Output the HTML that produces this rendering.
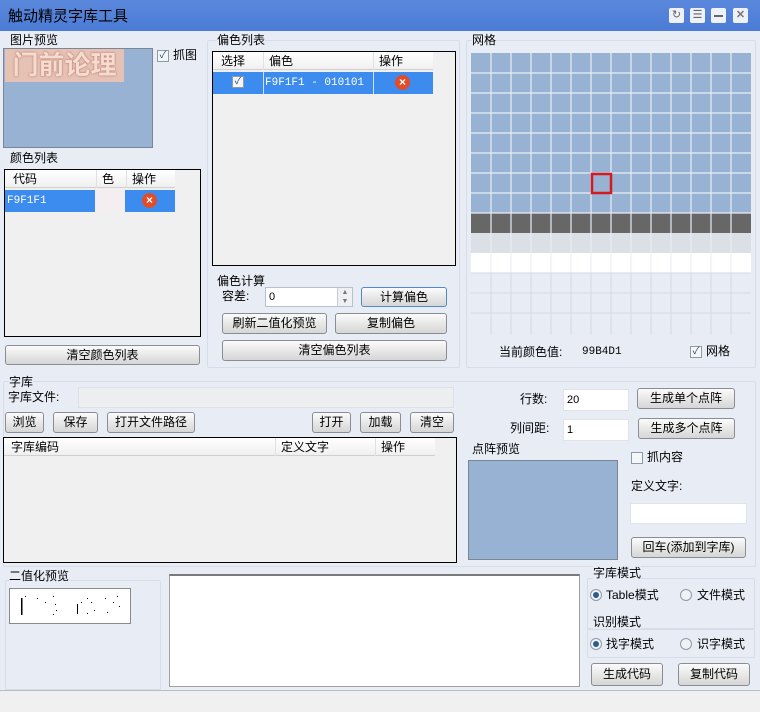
<!DOCTYPE html>
<html><head><meta charset="utf-8"><style>
*{box-sizing:border-box;margin:0;padding:0}
body{width:760px;height:712px;overflow:hidden;background:#e8edf5;font-family:"Liberation Sans","Noto Sans CJK SC",sans-serif;font-size:12px;color:#000;position:relative}
.a{position:absolute}
.t{position:absolute;white-space:nowrap;line-height:14px}
.btn{position:absolute;border:1px solid #8a8d92;border-radius:3px;background:linear-gradient(#fbfbfb,#e4e4e4 60%,#d6d6d6);text-align:center;font-size:12px;white-space:nowrap}
.inp{position:absolute;background:#fff;border:1px solid #b8c0cc;font-size:11px;padding-left:3px}
.grp{position:absolute;border:1px solid #d6dde8;border-radius:2px}
.cb{position:absolute;width:12px;height:12px;border:1px solid #8e9aa8;background:#f4f6f8;font-size:10px;line-height:10px;text-align:center;color:#2a4a7a}
.hdr{position:absolute;height:18px;background:linear-gradient(#fff,#f0f0f0);border-bottom:1px solid #d0d0d0;line-height:18px}
.hdr span{position:absolute;top:0;border-left:1px solid #e0e0e0;padding-left:5px;height:18px}
.x{position:absolute;width:15px;height:15px;border-radius:50%;background:#e44b28;color:#fff;font-size:12px;line-height:15px;text-align:center;font-weight:bold}
.rad{position:absolute;width:12px;height:12px;border-radius:50%;border:1px solid #8e9aa8;background:#f0f2f5}
.rad.on::after{content:"";position:absolute;left:2px;top:2px;width:6px;height:6px;border-radius:50%;background:#2c5d8a}
</style></head><body>
<!-- title -->
<div class="a" style="left:0;top:0;width:760px;height:31px;background:linear-gradient(#5a88dc,#4b7bd5)"></div>
<div class="t" style="left:8px;top:8px;font-size:15px;line-height:17px">触动精灵字库工具</div>
<div class="a" style="left:669px;top:8px;width:15px;height:15px;background:#eef2f8;border-radius:2px;font-size:11px;line-height:15px;text-align:center;color:#666">↻</div>
<div class="a" style="left:690px;top:8px;width:15px;height:15px;background:#eef2f8;border-radius:2px;font-size:11px;line-height:14px;text-align:center;color:#666">☰</div>
<div class="a" style="left:711px;top:8px;width:15px;height:15px;background:#eef2f8;border-radius:2px"><div class="a" style="left:3px;top:7px;width:9px;height:2px;background:#666"></div></div>
<div class="a" style="left:733px;top:8px;width:15px;height:15px;background:#eef2f8;border-radius:2px;font-size:11px;line-height:15px;text-align:center;color:#777;font-weight:bold">✕</div>

<!-- 图片预览 -->
<div class="grp" style="left:3px;top:40px;width:200px;height:108px;border:none"></div>
<div class="t" style="left:10px;top:33px">图片预览</div>
<div class="a" style="left:3px;top:48px;width:150px;height:100px;background:#97b2d2;border:1px solid #7a8696"></div>
<div class="a" style="left:5px;top:49px;width:119px;height:33px;background:#e6c2b4;color:#f6dcd0;font-size:26px;line-height:33px;font-weight:bold;text-align:center;text-shadow:0 0 2px #b87a6a,0 0 1px #b87a6a">门前论理</div>
<div class="cb" style="left:157px;top:50px">✓</div><div class="t" style="left:173px;top:48px">抓图</div>

<!-- 颜色列表 -->
<div class="t" style="left:10px;top:151px">颜色列表</div>
<div class="a" style="left:4px;top:169px;width:197px;height:168px;background:#f0f0f0;border:1px solid #000"></div>
<div class="hdr" style="left:5px;top:170px;width:170px"><span style="left:0;border:none;padding-left:8px">代码</span><span style="left:91px">色</span><span style="left:121px">操作</span></div>
<div class="a" style="left:5px;top:190px;width:90px;height:22px;background:#3c8cf0;color:#fff;font-family:'Liberation Mono',monospace;font-size:11px;line-height:22px;padding-left:2px">F9F1F1</div>
<div class="a" style="left:95px;top:190px;width:30px;height:22px;background:#f4eef0"></div>
<div class="a" style="left:125px;top:190px;width:50px;height:22px;background:#3c8cf0"><div class="x" style="left:17px;top:3px">×</div></div>
<div class="btn" style="left:5px;top:345px;width:195px;height:20px;line-height:18px">清空颜色列表</div>

<!-- 偏色列表 -->
<div class="grp" style="left:207px;top:40px;width:253px;height:328px"></div>
<div class="t" style="left:217px;top:33px;background:#e8edf5">偏色列表</div>
<div class="a" style="left:212px;top:51px;width:244px;height:215px;background:#f0f0f0;border:1px solid #000"></div>
<div class="hdr" style="left:213px;top:52px;width:220px"><span style="left:0;border:none;padding-left:8px">选择</span><span style="left:50px">偏色</span><span style="left:160px">操作</span></div>
<div class="a" style="left:213px;top:72px;width:220px;height:22px;background:#3c8cf0"></div>
<div class="cb" style="left:232px;top:76px;background:#f4f6f8">✓</div>
<div class="a" style="left:263px;top:72px;width:1px;height:22px;background:#cfe0f8"></div>
<div class="a" style="left:373px;top:72px;width:1px;height:22px;background:#cfe0f8"></div>
<div class="t" style="left:265px;top:76px;color:#fff;font-family:'Liberation Mono',monospace;font-size:11px">F9F1F1 - 010101</div>
<div class="x" style="left:395px;top:75px">×</div>
<div class="t" style="left:217px;top:274px">偏色计算</div>
<div class="t" style="left:222px;top:289px">容差:</div>
<div class="inp" style="left:265px;top:287px;width:88px;height:20px;line-height:18px">0</div>
<div class="a" style="left:337px;top:288px;width:15px;height:18px;background:#eef0f3;border-left:1px solid #c8ccd2;font-size:7px;line-height:9px;text-align:center;color:#777">▲<br>▼</div>
<div class="btn" style="left:361px;top:287px;width:86px;height:20px;line-height:18px;border-color:#4f8ad0">计算偏色</div>
<div class="btn" style="left:222px;top:313px;width:105px;height:21px;line-height:19px">刷新二值化预览</div>
<div class="btn" style="left:335px;top:313px;width:112px;height:21px;line-height:19px">复制偏色</div>
<div class="btn" style="left:222px;top:340px;width:225px;height:21px;line-height:19px">清空偏色列表</div>

<!-- 网格 -->
<div class="grp" style="left:466px;top:40px;width:290px;height:328px"></div>
<div class="t" style="left:472px;top:33px;background:#e8edf5">网格</div>
<svg class="a" style="left:471px;top:53px" width="280" height="282">
<rect x="0" y="0" width="280" height="160" fill="#97b2d2"/>
<rect x="0" y="160" width="280" height="20" fill="#676767"/>
<rect x="0" y="180" width="280" height="20" fill="#dbe0e6"/>
<rect x="0" y="200" width="280" height="20" fill="#ffffff"/>
<g stroke="#e8eef6" stroke-width="1.2">
<path d="M20 0V220M40 0V220M60 0V220M80 0V220M100 0V220M120 0V220M140 0V220M160 0V220M180 0V220M200 0V220M220 0V220M240 0V220M260 0V220"/>
<path d="M0 20H280M0 40H280M0 60H280M0 80H280M0 100H280M0 120H280M0 140H280M0 160H280"/>
</g>
<g stroke="#d6dae2" stroke-width="1"><path d="M20 220V282M40 220V282M60 220V282M80 220V282M100 220V282M120 220V282M140 220V282M160 220V282M180 220V282M200 220V282M220 220V282M240 220V282M260 220V282M0 220H280M0 240H280M0 260H280"/></g>
<rect x="121" y="121" width="19" height="19" fill="none" stroke="#d81820" stroke-width="2.5"/>
</svg>
<div class="t" style="left:499px;top:345px">当前颜色值:</div>
<div class="t" style="left:582px;top:345px;font-family:'Liberation Mono',monospace;font-size:11px">99B4D1</div>
<div class="cb" style="left:690px;top:346px">✓</div><div class="t" style="left:706px;top:344px">网格</div>

<!-- 字库 -->
<div class="grp" style="left:3px;top:381px;width:753px;height:186px"></div>
<div class="t" style="left:9px;top:375px;background:#e8edf5">字库</div>
<div class="t" style="left:8px;top:390px">字库文件:</div>
<div class="a" style="left:78px;top:387px;width:376px;height:21px;background:#eceef0;border:1px solid #dde0e4"></div>
<div class="btn" style="left:5px;top:412px;width:39px;height:21px;line-height:19px">浏览</div>
<div class="btn" style="left:53px;top:412px;width:45px;height:21px;line-height:19px">保存</div>
<div class="btn" style="left:107px;top:412px;width:88px;height:21px;line-height:19px">打开文件路径</div>
<div class="btn" style="left:312px;top:412px;width:39px;height:21px;line-height:19px">打开</div>
<div class="btn" style="left:360px;top:412px;width:41px;height:21px;line-height:19px">加载</div>
<div class="btn" style="left:410px;top:412px;width:44px;height:21px;line-height:19px">清空</div>
<div class="a" style="left:3px;top:437px;width:454px;height:126px;background:#f0f0f0;border:1px solid #000"></div>
<div class="hdr" style="left:4px;top:438px;width:431px"><span style="left:0;border:none;padding-left:7px">字库编码</span><span style="left:271px">定义文字</span><span style="left:371px">操作</span></div>
<div class="t" style="left:520px;top:392px">行数:</div>
<div class="inp" style="left:563px;top:389px;width:66px;height:22px;line-height:20px;border-color:#e0e4ea">20</div>
<div class="btn" style="left:637px;top:388px;width:98px;height:21px;line-height:19px">生成单个点阵</div>
<div class="t" style="left:510px;top:421px">列间距:</div>
<div class="inp" style="left:563px;top:419px;width:66px;height:22px;line-height:20px;border-color:#e0e4ea">1</div>
<div class="btn" style="left:638px;top:418px;width:97px;height:21px;line-height:19px">生成多个点阵</div>
<div class="t" style="left:472px;top:442px">点阵预览</div>
<div class="a" style="left:468px;top:460px;width:150px;height:100px;background:#97b2d2;border:1px solid #7a8696"></div>
<div class="cb" style="left:631px;top:452px"></div><div class="t" style="left:647px;top:450px">抓内容</div>
<div class="t" style="left:631px;top:479px">定义文字:</div>
<div class="inp" style="left:630px;top:503px;width:117px;height:21px;border-color:#e0e4ea"></div>
<div class="btn" style="left:631px;top:537px;width:115px;height:21px;line-height:19px">回车(添加到字库)</div>

<!-- bottom -->
<div class="grp" style="left:5px;top:580px;width:156px;height:110px"></div>
<div class="t" style="left:9px;top:569px;background:#e8edf5">二值化预览</div>
<div class="a" style="left:9px;top:588px;width:122px;height:36px;background:#fff;border:1px solid #8a8a8a"></div>
<svg class="a" style="left:9px;top:588px" width="122" height="36"><g fill="#000">
<rect x="12" y="10" width="1.5" height="17"/><rect x="16" y="8" width="1" height="1"/><rect x="28" y="10" width="1" height="1"/><rect x="36" y="14" width="1" height="1"/><rect x="44" y="8" width="1" height="1"/><rect x="46" y="16" width="1" height="1"/><rect x="47" y="22" width="1" height="1"/><rect x="44" y="26" width="1" height="1"/><rect x="68" y="16" width="1" height="10"/><rect x="72" y="14" width="1" height="1"/><rect x="78" y="10" width="1" height="1"/><rect x="82" y="14" width="1" height="1"/><rect x="85" y="22" width="1" height="1"/><rect x="78" y="25" width="1" height="1"/><rect x="96" y="10" width="1" height="1"/><rect x="104" y="14" width="1" height="1"/><rect x="108" y="8" width="1" height="1"/><rect x="98" y="24" width="1" height="1"/><rect x="110" y="18" width="1" height="1"/></g></svg>
<div class="a" style="left:169px;top:574px;width:411px;height:113px;background:#fff;border:1px solid #a0a0a0;border-top:2px solid #7a7a7a"></div>
<div class="grp" style="left:587px;top:578px;width:168px;height:52px"></div>
<div class="t" style="left:593px;top:566px;background:#e8edf5">字库模式</div>
<div class="rad on" style="left:590px;top:589px"></div><div class="t" style="left:606px;top:588px">Table模式</div>
<div class="rad" style="left:680px;top:589px"></div><div class="t" style="left:697px;top:588px">文件模式</div>
<div class="grp" style="left:587px;top:628px;width:168px;height:30px"></div>
<div class="t" style="left:593px;top:615px;background:#e8edf5">识别模式</div>
<div class="rad on" style="left:590px;top:638px"></div><div class="t" style="left:606px;top:637px">找字模式</div>
<div class="rad" style="left:680px;top:638px"></div><div class="t" style="left:697px;top:637px">识字模式</div>
<div class="btn" style="left:591px;top:663px;width:72px;height:23px;line-height:21px">生成代码</div>
<div class="btn" style="left:678px;top:663px;width:72px;height:23px;line-height:21px">复制代码</div>

<div class="a" style="left:0;top:690px;width:760px;height:22px;background:#f0f0f0;border-top:1px solid #b8bcc4"></div>
</body></html>
